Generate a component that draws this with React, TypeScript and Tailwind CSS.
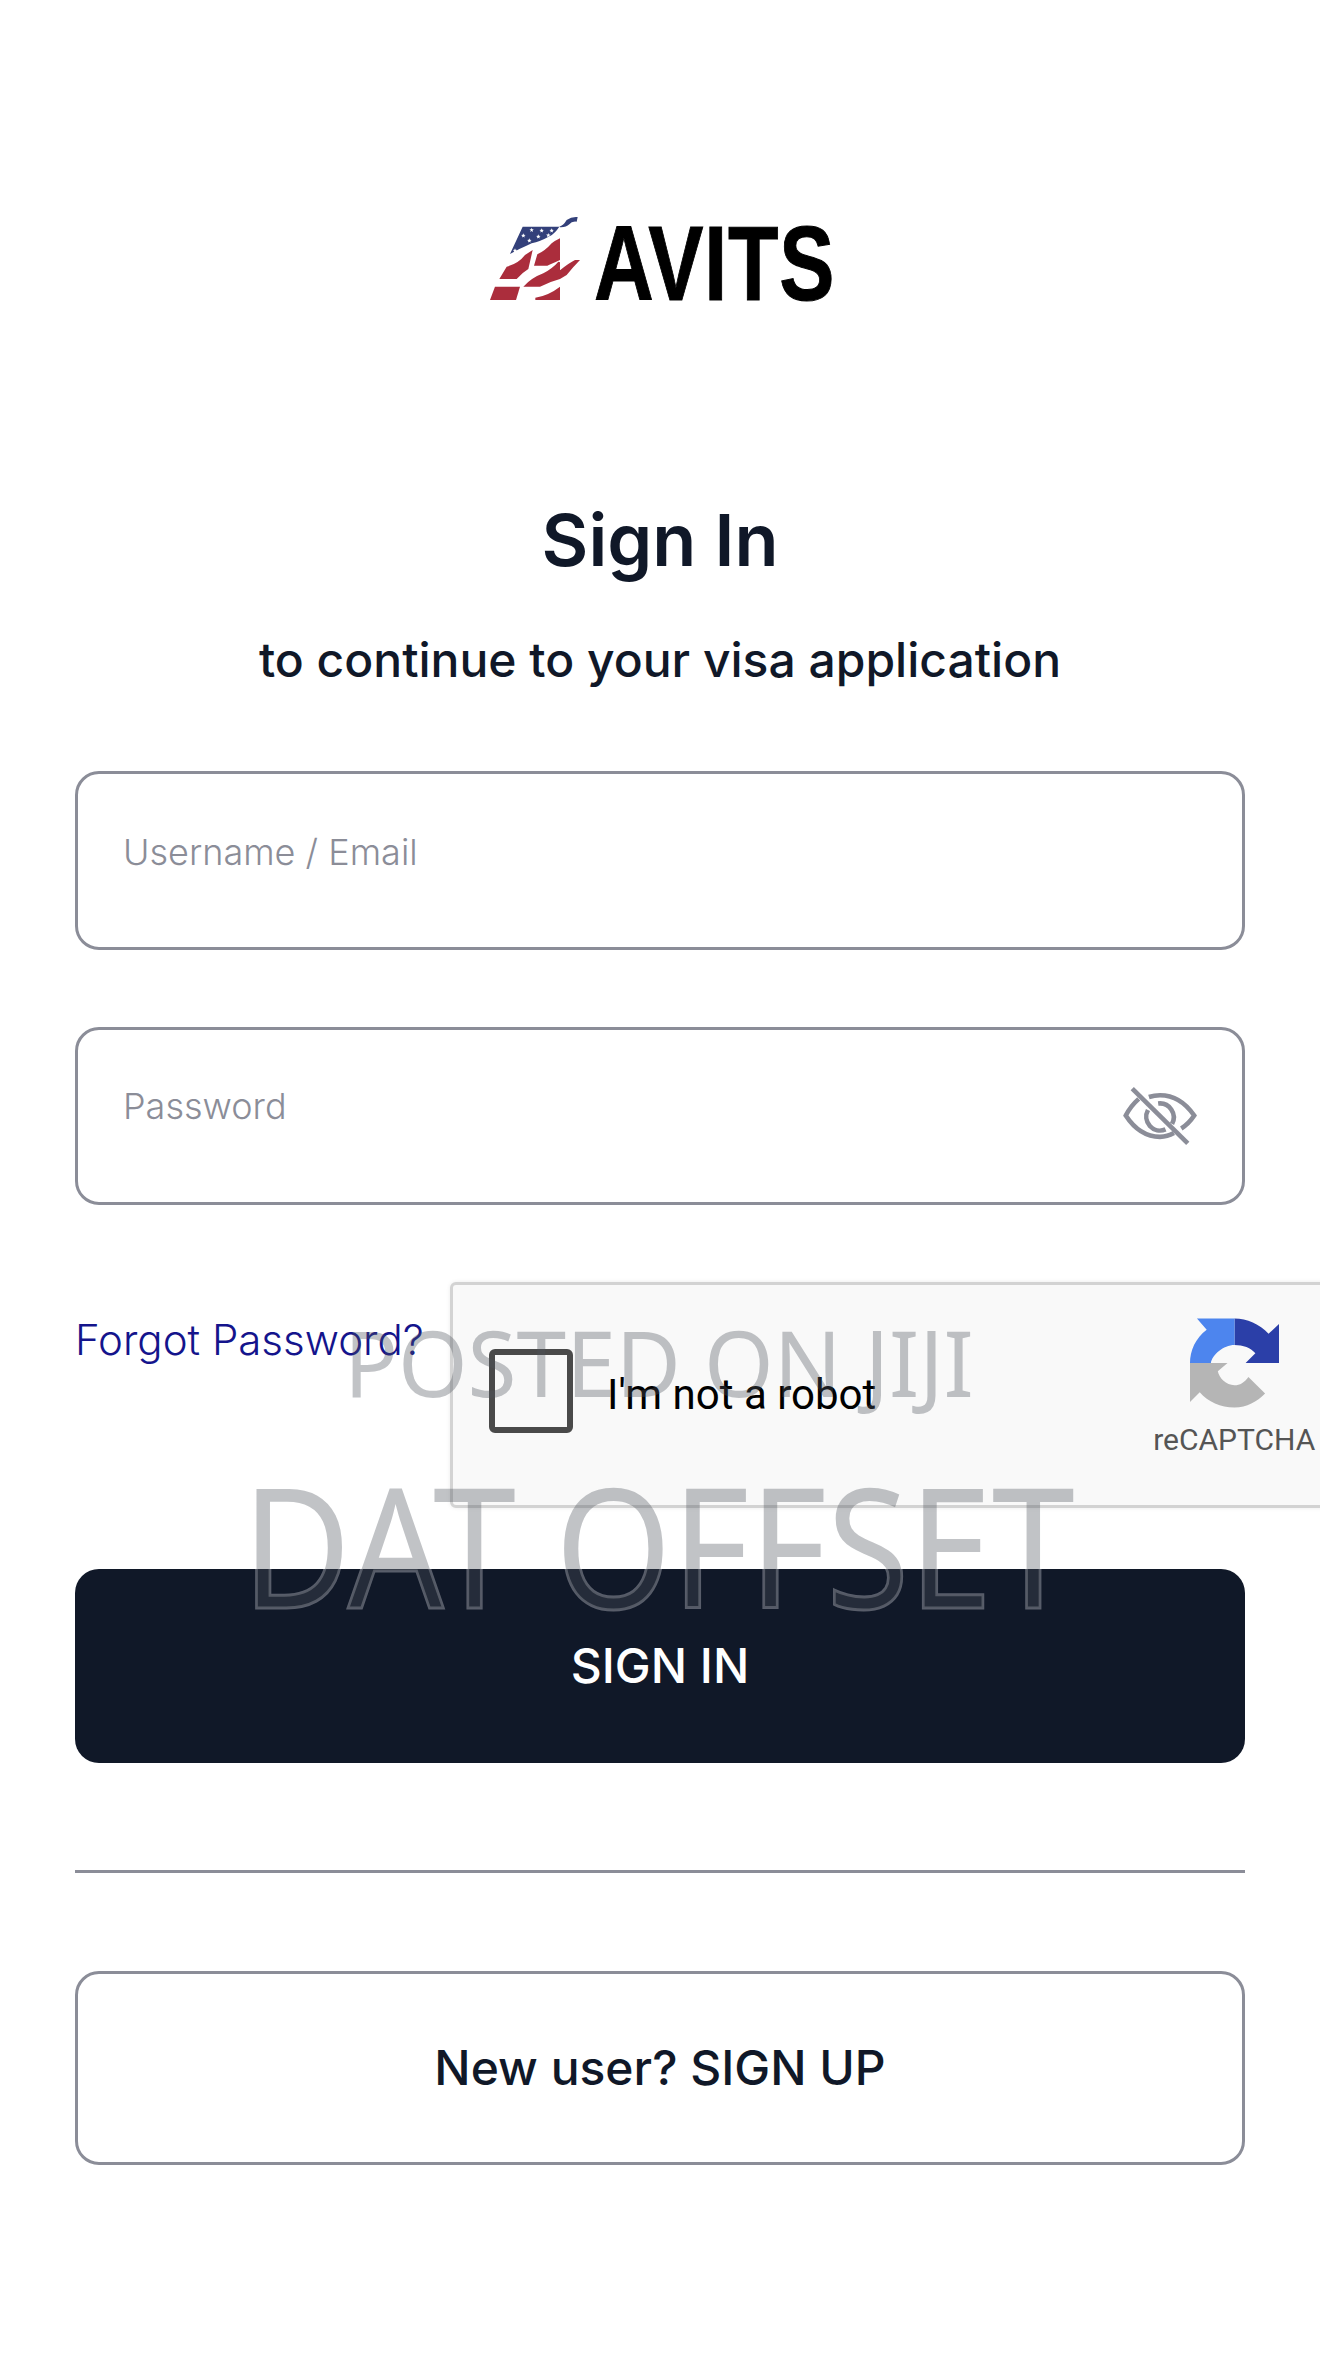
import { useId } from 'react';

const stars: [number, number][] = [
  [215, 115], [245, 117], [275, 117], [190, 132], [235, 135], [265, 131], [208, 147], [165, 177],
];

function starPoints(cx: number, cy: number, r: number) {
  const pts: string[] = [];
  for (let i = 0; i < 10; i++) {
    const a = (Math.PI / 5) * i - Math.PI / 2;
    const d = i % 2 === 0 ? r : r * 0.42;
    pts.push(`${cx + Math.cos(a) * d},${cy + Math.sin(a) * d}`);
  }
  return pts.join(' ');
}

function FlagLogo() {
  return (
    <svg width="92" height="87" viewBox="90 70 276 261" className="shrink-0">
      <path d="M188 105 L298 105 Q285 125 270 133 Q240 150 215 155 Q195 165 178 172 L150 187 Z" fill="#33407a" />
      <path d="M298 105 Q310 102 320 85 Q335 74 353 76 L350 90 Q335 88 328 98 Q318 108 300 107 Z" fill="#33407a" />
      {stars.map(([x, y]) => (
        <polygon key={`${x}-${y}`} points={starPoints(x, y, 7)} fill="#fff" />
      ))}
      <path d="M218 175 L205 232 Q188 242 170 262 L118 262 L140 225 Q175 216 195 190 Z" fill="#ab2d3c" />
      <path d="M300 140 L300 205 Q272 218 262 222 L222 222 L232 188 Q255 178 275 155 Q287 146 300 140 Z" fill="#ab2d3c" />
      <path d="M190 285 Q215 258 250 245 Q280 228 295 210 L300 212 L300 236 Q325 215 345 205 L360 205 Q340 225 320 250 L300 262 Q270 270 240 285 Z" fill="#ab2d3c" />
      <path d="M105 285 L180 285 L168 325 L90 325 Z" fill="#ab2d3c" />
      <path d="M300 285 L300 325 L226 325 L226 318 Q265 312 300 285 Z" fill="#ab2d3c" />
    </svg>
  );
}

function EyeOff() {
  return (
    <svg width="74" height="62" viewBox="0 0 80 65" fill="none" stroke="#8b8d98" strokeWidth="5" className="shrink-0">
      <path d="M10 3 L70 62" />
      <path d="M17 14 Q8 22 3 32 Q18 55 40 55 Q48 55 55 51" />
      <path d="M28 12 Q34 10 40 10 Q62 10 77 32 Q71 41 63 46" />
      <path d="M38 19 A15 15 0 0 1 53 41" />
      <path d="M27 26 A15 15 0 0 0 46 47" />
    </svg>
  );
}

function RecaptchaLogo() {
  const id = useId();
  return (
    <svg width="89" height="90" viewBox="0 0 64 64" aria-labelledby={id}>
      <title id={id}>recaptcha</title>
      <path d="M32 0 C41 0 50 4 56.5 11 L64 4 V32 H40 L47 25 C44 21 38 19 32 19 Z" fill="#2b3fa8" />
      <path d="M32 0 H5 L12 8 C4 14 0 23 0 32 H15 C16 26 24 19 32 19 Z" fill="#4d85ee" />
      <path d="M0 32 V60 L7 53 C13 60 22 64 32 64 C41 64 48 60 54 54 L42 42 C39 46 36 48 32 48 C26 48 21 43 20 38 L27 32 Z" fill="#b5b5b5" />
    </svg>
  );
}

export default function App() {
  return (
    <div className="relative h-[2368px] w-[1320px] overflow-hidden bg-white px-[75px] pt-[215px] font-['Inter',sans-serif] text-[#101828]">
      <div className="ml-[415px] flex h-[87px] items-end gap-[12px]">
        <FlagLogo />
        <span className="inline-block w-[237px] origin-left scale-x-[0.78] font-['Liberation_Sans',sans-serif] text-[106px] font-bold leading-[78px] tracking-[1px] text-black [-webkit-text-stroke:1px_black]">
          AVITS
        </span>
      </div>

      <h1 className="mt-[198px] text-center text-[72px] font-semibold leading-[80px]">Sign In</h1>
      <p className="mt-[50px] text-center text-[48px] font-medium leading-[60px]">to continue to your visa application</p>

      <div className="mt-[81px] flex h-[179px] items-center rounded-[24px] border-[3px] border-[#8b8d98] pl-[45px] pr-[45px]">
        <input
          placeholder="Username / Email"
          className="w-full bg-transparent pb-[18px] text-[36px] font-light outline-none placeholder:text-[#8b8d98]"
        />
      </div>
      <div className="mt-[77px] flex h-[178px] items-center gap-4 rounded-[24px] border-[3px] border-[#8b8d98] pl-[45px] pr-[45px]">
        <input
          placeholder="Password"
          className="w-full bg-transparent pb-[20px] text-[36px] font-light outline-none placeholder:text-[#8b8d98]"
        />
        <EyeOff />
      </div>

      <div className="mt-[77px] flex items-start justify-between">
        <a className="mt-[33px] text-[42px] font-light leading-[50px] text-[#14148c]">Forgot Password?</a>
        <div className="-mr-[165px] flex h-[226px] w-[960px] shrink-0 items-center rounded-[6px] border-[3px] border-[#d3d3d3] bg-[#f9f9f9] pl-[36px] shadow-[0_0_4px_rgba(0,0,0,0.08)]">
          <div className="mb-[8px] h-[84px] w-[84px] shrink-0 rounded-[6px] border-[6px] border-[#4a4a4a]" />
          <span className="ml-[34px] font-['Roboto',sans-serif] text-[42px] leading-[50px] text-black">I'm not a robot</span>
          <div className="mb-[15px] ml-[273px] flex w-[170px] flex-col items-center gap-[14px]">
            <RecaptchaLogo />
            <span className="font-['Roboto',sans-serif] text-[30px] leading-[36px] text-[#555]">reCAPTCHA</span>
          </div>
        </div>
      </div>

      <button className="relative mt-[61px] flex h-[194px] w-full items-center justify-center overflow-hidden rounded-[24px] bg-[#101828] text-[48px] font-medium text-white before:absolute before:left-[167px] before:top-[-125px] before:origin-left before:scale-x-[0.9] before:font-['Noto_Sans',sans-serif] before:text-[166px] before:font-normal before:leading-[200px] before:text-transparent before:content-['DAT_OFFSET'] before:[-webkit-text-stroke:3px_rgba(147,152,160,0.55)]">
        SIGN IN
      </button>

      <div className="mt-[107px] h-[3px] bg-[#8b8d98]" />

      <button className="mt-[98px] flex h-[194px] w-full items-center justify-center rounded-[24px] border-[3px] border-[#8b8d98] text-[48px] font-medium">
        New user? SIGN UP
      </button>

      {/* watermark */}
      <span className="pointer-events-none absolute left-[344px] top-[1297px] origin-left scale-x-[0.98] whitespace-nowrap font-['Noto_Sans',sans-serif] text-[91px] leading-[130px] text-[rgba(76,82,92,0.35)]">
        POSTED ON JIJI
      </span>
      <span className="pointer-events-none absolute left-[242px] top-[1444px] origin-left scale-x-[0.9] whitespace-nowrap font-['Noto_Sans',sans-serif] text-[166px] leading-[200px] text-[rgba(76,82,92,0.35)]">
        DAT OFFSET
      </span>
    </div>
  );
}
